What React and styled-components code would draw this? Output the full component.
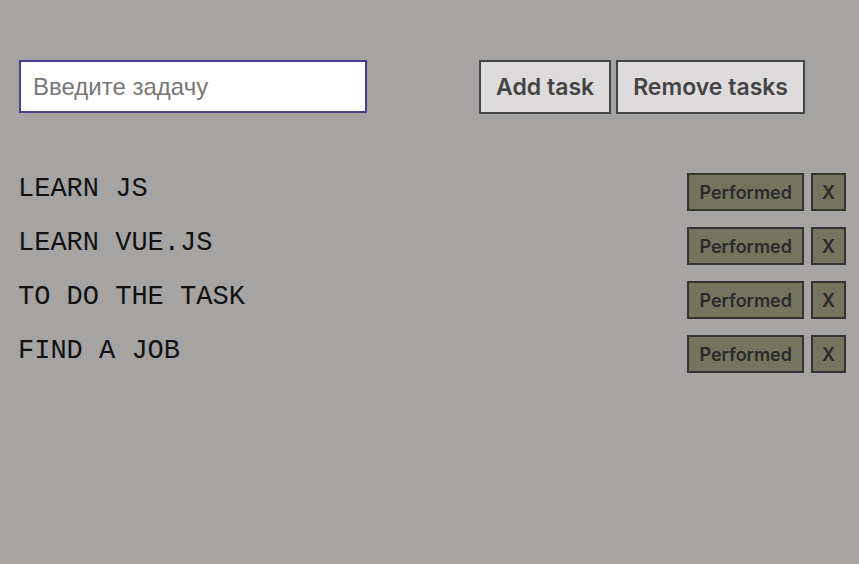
import React from 'react';
import styled, { createGlobalStyle } from 'styled-components';

const GlobalStyle = createGlobalStyle`
  html, body {
    margin: 0;
    padding: 0;
    background: #a5a4a2;
  }
`;

const Page = styled.div`
  width: 859px;
  height: 564px;
  box-sizing: border-box;
  padding: 60px 13px 0 18px;
`;

const Header = styled.div`
  display: flex;
  align-items: flex-start;
  justify-content: space-between;
  padding: 0 41px 0 1px;
`;

const TaskInput = styled.input`
  width: 348px;
  height: 53px;
  box-sizing: border-box;
  padding: 0 12px;
  border: 2px solid #4b3c8f;
  background: #fff;
  font-family: 'Liberation Sans', Arial, sans-serif;
  font-size: 24px;
  color: #333;
  outline: none;

  &::placeholder {
    color: #777;
  }
`;

const Actions = styled.div`
  display: flex;
  gap: 5px;
`;

const Button = styled.button`
  height: 54px;
  box-sizing: border-box;
  padding: 0 15px;
  border: 2px solid #444;
  background: #dddbdc;
  color: #444;
  font-family: Inter, 'Open Sans', sans-serif;
  font-weight: 600;
  font-size: 23px;
  cursor: pointer;
`;

const List = styled.ul`
  list-style: none;
  margin: 59px 0 0;
  padding: 0;
  display: flex;
  flex-direction: column;
  gap: 16px;
`;

const Row = styled.li`
  display: flex;
  align-items: center;
  justify-content: space-between;
  height: 38px;
`;

const Title = styled.span`
  font-family: 'Liberation Mono', 'Courier New', monospace;
  font-size: 27px;
  color: #111;
  text-transform: uppercase;
  margin-top: -6px;
`;

const RowActions = styled.div`
  display: flex;
  gap: 7px;
`;

const SmallButton = styled.button`
  height: 38px;
  box-sizing: border-box;
  padding: 0 ${(p) => (p.$square ? '0' : '10px')};
  width: ${(p) => (p.$square ? '35px' : 'auto')};
  border: 2px solid #333;
  background: #75755f;
  color: #2a2a2a;
  font-family: Inter, 'Open Sans', sans-serif;
  font-weight: 600;
  font-size: 18px;
  cursor: pointer;
`;

const tasks = ['Learn JS', 'Learn Vue.js', 'To do the task', 'Find a job'];

export default function App() {
  return (
    <>
      <GlobalStyle />
      <Page>
        <Header>
          <TaskInput placeholder="Введите задачу" />
          <Actions>
            <Button>Add task</Button>
            <Button>Remove tasks</Button>
          </Actions>
        </Header>
        <List>
          {tasks.map((t) => (
            <Row key={t}>
              <Title>{t}</Title>
              <RowActions>
                <SmallButton>Performed</SmallButton>
                <SmallButton $square>X</SmallButton>
              </RowActions>
            </Row>
          ))}
        </List>
      </Page>
    </>
  );
}
